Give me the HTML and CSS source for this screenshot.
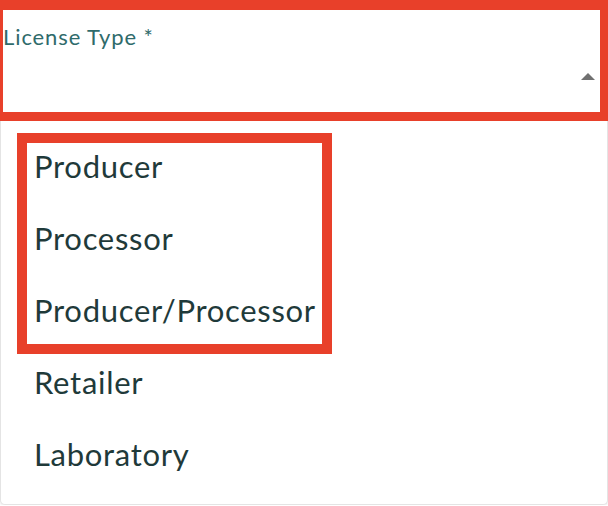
FILE: index.html
```html
<!DOCTYPE html>
<html lang="en">
<head>
    <meta charset="UTF-8">
    <meta name="viewport" content="width=device-width, initial-scale=1.0">
    <title>License Type</title>
    <link rel="stylesheet" href="styles.css">
</head>
<body>
    <div class="select">
        <div class="field">
            <label class="field-label">License Type *</label>
            <div class="field-input">
                <span class="arrow"></span>
            </div>
        </div>

        <ul class="menu">
            <div class="group">
                <li class="menu-item">Producer</li>
                <li class="menu-item">Processor</li>
                <li class="menu-item">Producer/Processor</li>
            </div>
            <li class="menu-item">Retailer</li>
            <li class="menu-item">Laboratory</li>
        </ul>
    </div>
</body>
</html>
```

FILE: styles.css
```css
body {
    font-family: Lato, "Open Sans", sans-serif;
    background-color: #fff;
    margin: 0;
    overflow: hidden;
}

.select {
    width: 608px;
}

.field {
    box-sizing: border-box;
    height: 121px;
    margin-left: -6px;
    width: 614px;
    border: 9px solid #e8402a;
    border-top-width: 10px;
    border-right-width: 8px;
    padding: 14px 5px 0 0;
}

.field-label {
    display: block;
    font-size: 22px;
    line-height: 26px;
    letter-spacing: 0.9px;
    color: #2f6b6b;
}

.field-input {
    display: flex;
    justify-content: flex-end;
    padding-top: 23px;
}

.arrow {
    width: 0;
    height: 0;
    border-left: 7px solid transparent;
    border-right: 7px solid transparent;
    border-bottom: 7px solid #707070;
}

.menu {
    list-style: none;
    margin: 0;
    padding: 9px 0 14px;
    width: 606px;
    background-color: #fff;
    border: 1px solid #e4e4e4;
    border-top: none;
    border-radius: 0 0 5px 5px;
    box-shadow: 0 2px 3px rgba(0, 0, 0, 0.08);
}

.group {
    position: relative;
}

.group::after {
    content: "";
    position: absolute;
    left: 16px;
    top: 3px;
    width: 295px;
    height: 201px;
    border: 10px solid #e8402a;
}

.menu-item {
    padding-left: 33px;
    font-size: 31px;
    line-height: 72px;
    letter-spacing: 0.7px;
    color: #1f3a3a;
}
```
